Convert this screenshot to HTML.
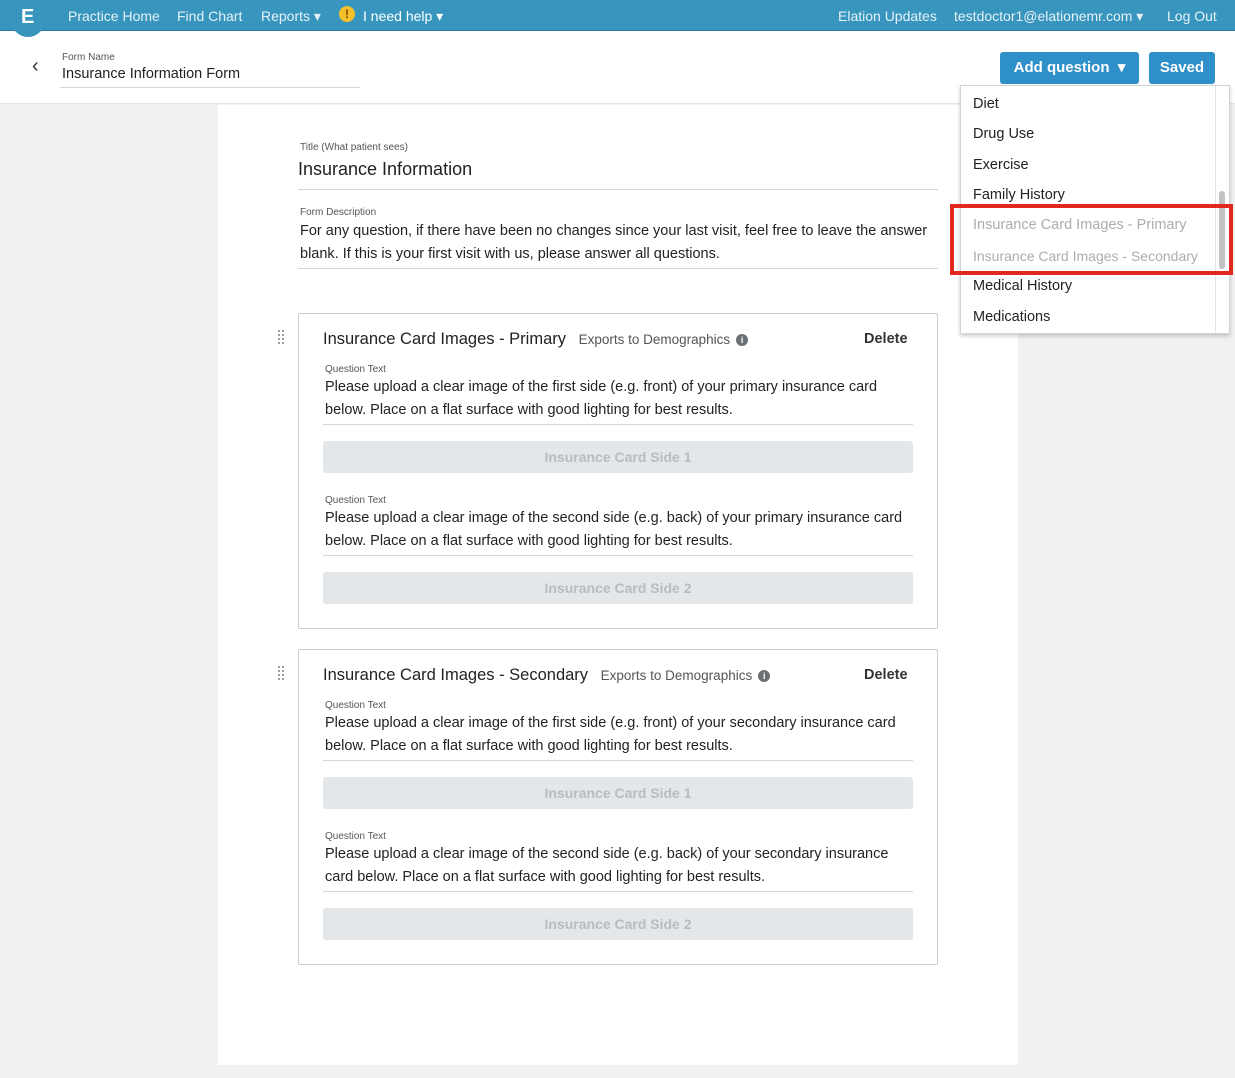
<!DOCTYPE html>
<html><head><meta charset="utf-8"><style>
*{box-sizing:border-box;margin:0;padding:0}
body{width:1235px;height:1078px;overflow:hidden;background:#f0f1f2;font-family:"Liberation Sans",sans-serif;color:#222;position:relative}
.a{position:absolute;white-space:nowrap}
.top{position:absolute;left:0;top:0;width:1235px;height:31px;background:#3795be;border-bottom:1px solid #2a7da3}
.top span{position:absolute;top:7px;color:#e6f2f8;font-size:14px}
.hdr{position:absolute;left:0;top:31px;width:1235px;height:73px;background:#fff;border-bottom:1px solid #e3e6e8}
.main{position:absolute;left:218px;top:105px;width:800px;height:960px;background:#fff}
.lbl{font-size:10px;color:#555}
.txt{font-size:14.5px;line-height:23px;color:#222}
.line{position:absolute;height:1px;background:#d3d7da}
.card{position:absolute;left:298px;width:640px;border:1px solid #c9ced2;border-radius:2px;background:#fff}
.btn{position:absolute;left:24px;width:590px;height:32px;background:#e4e7e9;border-radius:3px;color:#b7bcc0;font-size:14px;font-weight:bold;text-align:center;line-height:32px}
.dd{position:absolute;left:960px;top:85px;width:270px;height:249px;background:#fff;border:1px solid #d0d4d7;box-shadow:0 2px 4px rgba(0,0,0,.2)}
.dd div{position:absolute;left:12px;font-size:14.5px;color:#222}
.bb{position:absolute;background:#2f8fc8;color:#fff;font-weight:bold;font-size:15px;border-radius:3px;text-align:center;line-height:32px;height:32px}
.info{display:inline-block;width:12px;height:12px;border-radius:6px;background:#6a6f74;color:#fff;font-size:9px;text-align:center;line-height:12px;font-weight:bold;vertical-align:1px;margin-left:6px}
.grip{position:absolute;left:277px;width:8px;height:16px;background-image:radial-gradient(circle,#999 1px,transparent 1.2px);background-size:4px 4px}
</style></head><body>
<div class="top">
<span style="left:68px;top:8px">Practice Home</span>
<span style="left:177px;top:8px">Find Chart</span>
<span style="left:261px;top:8px">Reports ▾</span>
<span style="left:339px;top:6px;width:16px;height:16px;border-radius:8px;background:#f5c02a;color:#7a4a00;font-weight:bold;text-align:center;font-size:12px;line-height:16px">!</span>
<span style="left:363px;top:8px;color:#fff">I need help ▾</span>
<span style="left:838px;top:8px">Elation Updates</span>
<span style="left:954px;top:8px">testdoctor1@elationemr.com ▾</span>
<span style="left:1167px;top:8px">Log Out</span>
</div>
<div class="hdr">
<div class="a" style="left:32px;top:24px;font-size:20px;color:#333">‹</div>
<div class="a lbl" style="left:62px;top:21px">Form Name</div>
<div class="a" style="left:62px;top:35px;font-size:14.5px">Insurance Information Form</div>
<div class="line" style="left:60px;top:56px;width:300px"></div>
</div>
<div style="position:absolute;left:11px;top:0;width:34px;height:37px;border-radius:0 0 17px 17px;background:#3795be"></div>
<div class="a" style="left:21px;top:6px;font-size:20px;font-weight:bold;color:#fff">E</div>
<div class="bb" style="left:1000px;top:52px;width:139px">Add question &nbsp;▾</div>
<div class="bb" style="left:1149px;top:52px;width:66px">Saved</div>
<div class="main"></div>
<div class="a lbl" style="left:300px;top:142px">Title (What patient sees)</div>
<div class="a" style="left:298px;top:159px;font-size:18px">Insurance Information</div>
<div class="line" style="left:298px;top:189px;width:640px"></div>
<div class="a lbl" style="left:300px;top:207px">Form Description</div>
<div class="a txt" style="left:300px;top:220px">For any question, if there have been no changes since your last visit, feel free to leave the answer<br>blank. If this is your first visit with us, please answer all questions.</div>
<div class="line" style="left:298px;top:268px;width:640px"></div>

<div class="grip" style="top:329px"></div>
<div class="card" style="top:313px;height:316px">
<div class="a" style="left:24px;top:16px;font-size:16.5px">Insurance Card Images - Primary <span style="font-size:13.5px;color:#555;margin-left:8px">Exports to Demographics</span><span class="info">i</span></div>
<div class="a" style="left:565px;top:17px;font-size:14.5px;font-weight:bold;color:#333">Delete</div>
<div class="a lbl" style="left:26px;top:50px">Question Text</div>
<div class="a txt" style="left:26px;top:62px">Please upload a clear image of the first side (e.g. front) of your primary insurance card<br>below. Place on a flat surface with good lighting for best results.</div>
<div class="line" style="left:24px;top:110px;width:590px"></div>
<div class="btn" style="top:127px">Insurance Card Side 1</div>
<div class="a lbl" style="left:26px;top:181px">Question Text</div>
<div class="a txt" style="left:26px;top:193px">Please upload a clear image of the second side (e.g. back) of your primary insurance card<br>below. Place on a flat surface with good lighting for best results.</div>
<div class="line" style="left:24px;top:241px;width:590px"></div>
<div class="btn" style="top:258px">Insurance Card Side 2</div>
</div>

<div class="grip" style="top:665px"></div>
<div class="card" style="top:649px;height:316px">
<div class="a" style="left:24px;top:16px;font-size:16.5px">Insurance Card Images - Secondary <span style="font-size:13.5px;color:#555;margin-left:8px">Exports to Demographics</span><span class="info">i</span></div>
<div class="a" style="left:565px;top:17px;font-size:14.5px;font-weight:bold;color:#333">Delete</div>
<div class="a lbl" style="left:26px;top:50px">Question Text</div>
<div class="a txt" style="left:26px;top:62px">Please upload a clear image of the first side (e.g. front) of your secondary insurance card<br>below. Place on a flat surface with good lighting for best results.</div>
<div class="line" style="left:24px;top:110px;width:590px"></div>
<div class="btn" style="top:127px">Insurance Card Side 1</div>
<div class="a lbl" style="left:26px;top:181px">Question Text</div>
<div class="a txt" style="left:26px;top:193px">Please upload a clear image of the second side (e.g. back) of your secondary insurance<br>card below. Place on a flat surface with good lighting for best results.</div>
<div class="line" style="left:24px;top:241px;width:590px"></div>
<div class="btn" style="top:258px">Insurance Card Side 2</div>
</div>

<div class="dd">
<div style="top:10px">Diet</div>
<div style="top:40px">Drug Use</div>
<div style="top:71px">Exercise</div>
<div style="top:101px">Family History</div>
<div style="top:131px;color:#a9aeb2">Insurance Card Images - Primary</div>
<div style="top:162px;color:#a9aeb2;font-size:14px">Insurance Card Images - Secondary</div>
<div style="top:192px">Medical History</div>
<div style="top:223px">Medications</div>
<span style="position:absolute;left:254px;top:0;width:1px;height:247px;background:#e3e3e3"></span>
<span style="position:absolute;left:258px;top:105px;width:6px;height:78px;border-radius:3px;background:#c2c2c2"></span>
</div>
<div style="position:absolute;left:950px;top:204px;width:283px;height:71px;border:4px solid #e0281e"></div>
</body></html>
